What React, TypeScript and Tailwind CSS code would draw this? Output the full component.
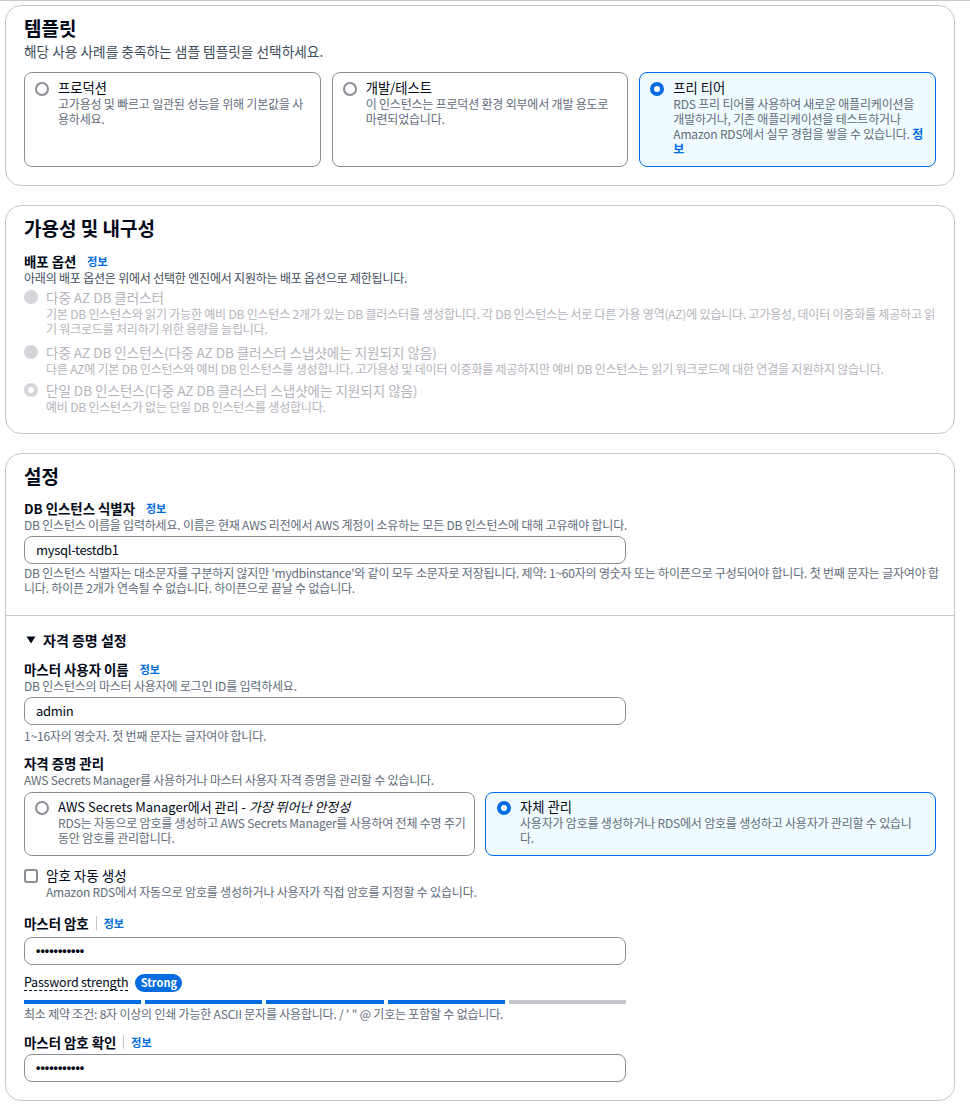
import React from "react";

function Radio({ checked, disabled }: { checked?: boolean; disabled?: boolean }) {
  let cls = "";
  if (disabled && checked) cls = "border-[4px] border-[#d5d5da] bg-white";
  else if (disabled) cls = "bg-[#d5d5da]";
  else if (checked) cls = "border-[4px] border-[#006ce0] bg-white";
  else cls = "border-2 border-[#8c8c94] bg-white";
  return <span className={`mt-[2px] block h-[14px] w-[14px] shrink-0 rounded-full ${cls}`} />;
}

function Info({ className = "" }: { className?: string }) {
  return <span className={`text-[11px] font-bold leading-[18px] text-[#006ce0] ${className}`}>정보</span>;
}

function Heading({ children }: { children: React.ReactNode }) {
  return <h2 className="text-[19px] font-bold leading-[24px] text-[#000716]">{children}</h2>;
}

function Label({ children, info, divider }: { children: React.ReactNode; info?: boolean; divider?: boolean }) {
  return (
    <div className="flex items-center text-[13.4px] font-bold leading-[18px] text-[#000716]">
      <span>{children}</span>
      {info && !divider && <Info className="ml-[11px]" />}
      {info && divider && (
        <>
          <span className="ml-[7px] h-[14px] w-px bg-[#c6c6cd]" />
          <Info className="ml-[7px]" />
        </>
      )}
    </div>
  );
}

function Desc({ children, className = "" }: { children: React.ReactNode; className?: string }) {
  return <div className={`text-[12px] leading-[15px] tracking-[-0.2px] text-[#5f6b7a] ${className}`}>{children}</div>;
}

function Lines({ lines }: { lines: React.ReactNode[] }) {
  return (
    <span className="block whitespace-nowrap">
      {lines.map((l, i) => (
        <React.Fragment key={i}>
          {i > 0 && <br />}
          {l}
        </React.Fragment>
      ))}
    </span>
  );
}

function TemplateCard({ title, lines, selected }: { title: string; lines: React.ReactNode[]; selected?: boolean }) {
  return (
    <div
      className={`flex gap-[9px] rounded-[8px] border pb-[10px] pl-[10px] pr-[8px] pt-[7px] ${
        selected ? "border-[#006ce0] bg-[#f0fbff]" : "border-[#8c8c94] bg-white"
      }`}
    >
      <Radio checked={selected} />
      <div>
        <div className="text-[13.3px] leading-[16px] text-[#000716]">{title}</div>
        <Desc>
          <Lines lines={lines} />
        </Desc>
      </div>
    </div>
  );
}

function DeployOption({ title, lines, checked, className = "" }: { title: string; lines: string[]; checked?: boolean; className?: string }) {
  return (
    <div className={`flex gap-[8px] ${className}`}>
      <Radio disabled checked={checked} />
      <div>
        <div className="text-[13.5px] leading-[18px] text-[#b4b4bb]">{title}</div>
        <div className="text-[12px] leading-[15px] tracking-[-0.2px] text-[#b4b4bb]">
          <Lines lines={lines} />
        </div>
      </div>
    </div>
  );
}

function Input({ children }: { children: React.ReactNode }) {
  return (
    <div className="flex h-[28px] w-[602px] items-center rounded-[8px] border border-[#8c8c94] bg-white pl-[11px] text-[13px] tracking-[-0.3px] text-[#000716]">
      {children}
    </div>
  );
}

function Dots() {
  return (
    <span className="font-['Liberation_Sans',sans-serif] text-[12.5px] font-bold tracking-normal text-[#000716]">
      •••••••••••
    </span>
  );
}

export default function App() {
  return (
    <div className="min-h-[1120px] w-[970px] bg-white font-['Noto_Sans_CJK_KR',sans-serif]">
      <div className="h-px w-full bg-[#c6c6cd]" />

      {/* 템플릿 */}
      <section className="ml-[5px] mt-[4px] w-[950px] rounded-[16px] border border-[#c6c6cd] bg-white px-[18px] pb-[18px] pt-[10px]">
        <Heading>템플릿</Heading>
        <div className="mt-[2px] text-[13.7px] leading-[18px] text-[#414d5c]">
          해당 사용 사례를 충족하는 샘플 템플릿을 선택하세요.
        </div>
        <div className="mt-[12px] grid grid-cols-3 gap-[11px]">
          <TemplateCard title="프로덕션" lines={["고가용성 및 빠르고 일관된 성능을 위해 기본값을 사", "용하세요."]} />
          <TemplateCard title="개발/테스트" lines={["이 인스턴스는 프로덕션 환경 외부에서 개발 용도로", "마련되었습니다."]} />
          <TemplateCard
            selected
            title="프리 티어"
            lines={[
              "RDS 프리 티어를 사용하여 새로운 애플리케이션을",
              "개발하거나, 기존 애플리케이션을 테스트하거나",
              <>
                Amazon RDS에서 실무 경험을 쌓을 수 있습니다. <span className="font-bold text-[#006ce0]">정</span>
              </>,
              <span className="font-bold text-[#006ce0]">보</span>,
            ]}
          />
        </div>
      </section>

      {/* 가용성 및 내구성 */}
      <section className="ml-[5px] mt-[19px] w-[950px] rounded-[16px] border border-[#c6c6cd] bg-white px-[18px] pb-[19px] pt-[10px]">
        <Heading>가용성 및 내구성</Heading>
        <div className="mt-[12px]">
          <Label info>배포 옵션</Label>
        </div>
        <div className="text-[12px] leading-[16px] tracking-[-0.2px] text-[#414d5c]">
          아래의 배포 옵션은 위에서 선택한 엔진에서 지원하는 배포 옵션으로 제한됩니다.
        </div>
        <DeployOption
          className="mt-[2px]"
          title="다중 AZ DB 클러스터"
          lines={[
            "기본 DB 인스턴스와 읽기 가능한 예비 DB 인스턴스 2개가 있는 DB 클러스터를 생성합니다. 각 DB 인스턴스는 서로 다른 가용 영역(AZ)에 있습니다. 고가용성, 데이터 이중화를 제공하고 읽",
            "기 워크로드를 처리하기 위한 용량을 늘립니다.",
          ]}
        />
        <DeployOption
          className="mt-[7px]"
          title="다중 AZ DB 인스턴스(다중 AZ DB 클러스터 스냅샷에는 지원되지 않음)"
          lines={[
            "다른 AZ에 기본 DB 인스턴스와 예비 DB 인스턴스를 생성합니다. 고가용성 및 데이터 이중화를 제공하지만 예비 DB 인스턴스는 읽기 워크로드에 대한 연결을 지원하지 않습니다.",
          ]}
        />
        <DeployOption
          className="mt-[5px]"
          checked
          title="단일 DB 인스턴스(다중 AZ DB 클러스터 스냅샷에는 지원되지 않음)"
          lines={["예비 DB 인스턴스가 없는 단일 DB 인스턴스를 생성합니다."]}
        />
      </section>

      {/* 설정 */}
      <section className="ml-[5px] mt-[19px] w-[950px] rounded-[16px] border border-[#c6c6cd] bg-white">
        <div className="px-[18px] pb-[20px] pt-[10px]">
          <Heading>설정</Heading>
          <div className="mt-[11px]">
            <Label info>DB 인스턴스 식별자</Label>
          </div>
          <Desc>DB 인스턴스 이름을 입력하세요. 이름은 현재 AWS 리전에서 AWS 계정이 소유하는 모든 DB 인스턴스에 대해 고유해야 합니다.</Desc>
          <div className="mt-[4px]">
            <Input>mysql-testdb1</Input>
          </div>
          <div className="mt-[1px] text-[12px] leading-[15px] tracking-[-0.2px] text-[#5f6b7a]">
            <Lines
              lines={[
                "DB 인스턴스 식별자는 대소문자를 구분하지 않지만 'mydbinstance'와 같이 모두 소문자로 저장됩니다. 제약: 1~60자의 영숫자 또는 하이픈으로 구성되어야 합니다. 첫 번째 문자는 글자여야 합",
                "니다. 하이픈 2개가 연속될 수 없습니다. 하이픈으로 끝날 수 없습니다.",
              ]}
            />
          </div>
        </div>

        <div className="border-t border-[#c6c6cd] px-[18px] pb-[18px] pt-[15px]">
          <div className="flex items-center gap-[7px] text-[14px] font-bold leading-[18px] text-[#000716]">
            <svg width="10" height="8" viewBox="0 0 10 8" className="ml-[2px]">
              <path d="M0.5 0.5 L9.5 0.5 L5 7.5 Z" fill="#000716" />
            </svg>
            <span>자격 증명 설정</span>
          </div>

          <div className="mt-[11px]">
            <Label info>마스터 사용자 이름</Label>
          </div>
          <Desc>DB 인스턴스의 마스터 사용자에 로그인 ID를 입력하세요.</Desc>
          <div className="mt-[4px]">
            <Input>admin</Input>
          </div>
          <div className="mt-[4px] text-[12px] leading-[14px] tracking-[-0.2px] text-[#5f6b7a]">
            1~16자의 영숫자. 첫 번째 문자는 글자여야 합니다.
          </div>

          <div className="mt-[11px]">
            <Label>자격 증명 관리</Label>
          </div>
          <Desc>AWS Secrets Manager를 사용하거나 마스터 사용자 자격 증명을 관리할 수 있습니다.</Desc>

          <div className="mt-[5px] grid grid-cols-2 gap-[10px]">
            <div className="flex gap-[9px] rounded-[8px] border border-[#8c8c94] bg-white pb-[10px] pl-[10px] pt-[6px]">
              <Radio />
              <div>
                <div className="text-[13px] leading-[16px] text-[#000716]">
                  AWS Secrets Manager에서 관리 - <i>가장 뛰어난 안정성</i>
                </div>
                <Desc>
                  <Lines
                    lines={["RDS는 자동으로 암호를 생성하고 AWS Secrets Manager를 사용하여 전체 수명 주기", "동안 암호를 관리합니다."]}
                  />
                </Desc>
              </div>
            </div>
            <div className="flex gap-[9px] rounded-[8px] border border-[#006ce0] bg-[#f0fbff] pb-[10px] pl-[11px] pt-[6px]">
              <Radio checked />
              <div>
                <div className="text-[13.3px] leading-[16px] text-[#000716]">자체 관리</div>
                <Desc>
                  <Lines lines={["사용자가 암호를 생성하거나 RDS에서 암호를 생성하고 사용자가 관리할 수 있습니", "다."]} />
                </Desc>
              </div>
            </div>
          </div>

          <div className="mt-[10px] flex gap-[8px]">
            <span className="mt-[3px] block h-[14px] w-[14px] shrink-0 rounded-[3px] border-2 border-[#8c8c94] bg-white" />
            <div>
              <div className="text-[13.5px] leading-[18px] text-[#000716]">암호 자동 생성</div>
              <Desc>Amazon RDS에서 자동으로 암호를 생성하거나 사용자가 직접 암호를 지정할 수 있습니다.</Desc>
            </div>
          </div>

          <div className="mt-[15px]">
            <Label info divider>
              마스터 암호
            </Label>
          </div>
          <div className="mt-[5px]">
            <Input>
              <Dots />
            </Input>
          </div>

          <div className="mt-[8px] flex h-[19px] items-center gap-[7px]">
            <span className="border-b border-dashed border-[#000716] text-[12.5px] leading-[16px] tracking-[-0.2px] text-[#000716]">
              Password strength
            </span>
            <span className="flex h-[18px] w-[47px] items-center justify-center rounded-full bg-[#006ce0] text-[11px] font-bold text-white">
              Strong
            </span>
          </div>

          <div className="mt-[8px] flex w-[602px] gap-[4px]">
            <span className="h-[4px] flex-1 bg-[#006ce0]" />
            <span className="h-[4px] flex-1 bg-[#006ce0]" />
            <span className="h-[4px] flex-1 bg-[#006ce0]" />
            <span className="h-[4px] flex-1 bg-[#006ce0]" />
            <span className="h-[4px] flex-1 bg-[#c6c6cd]" />
          </div>
          <div className="mt-[3px] text-[12px] leading-[14px] tracking-[-0.2px] text-[#5f6b7a]">
            최소 제약 조건: 8자 이상의 인쇄 가능한 ASCII 문자를 사용합니다. / ' " @ 기호는 포함할 수 없습니다.
          </div>

          <div className="mt-[12px]">
            <Label info divider>
              마스터 암호 확인
            </Label>
          </div>
          <div className="mt-[3px]">
            <Input>
              <Dots />
            </Input>
          </div>
        </div>
      </section>
    </div>
  );
}
